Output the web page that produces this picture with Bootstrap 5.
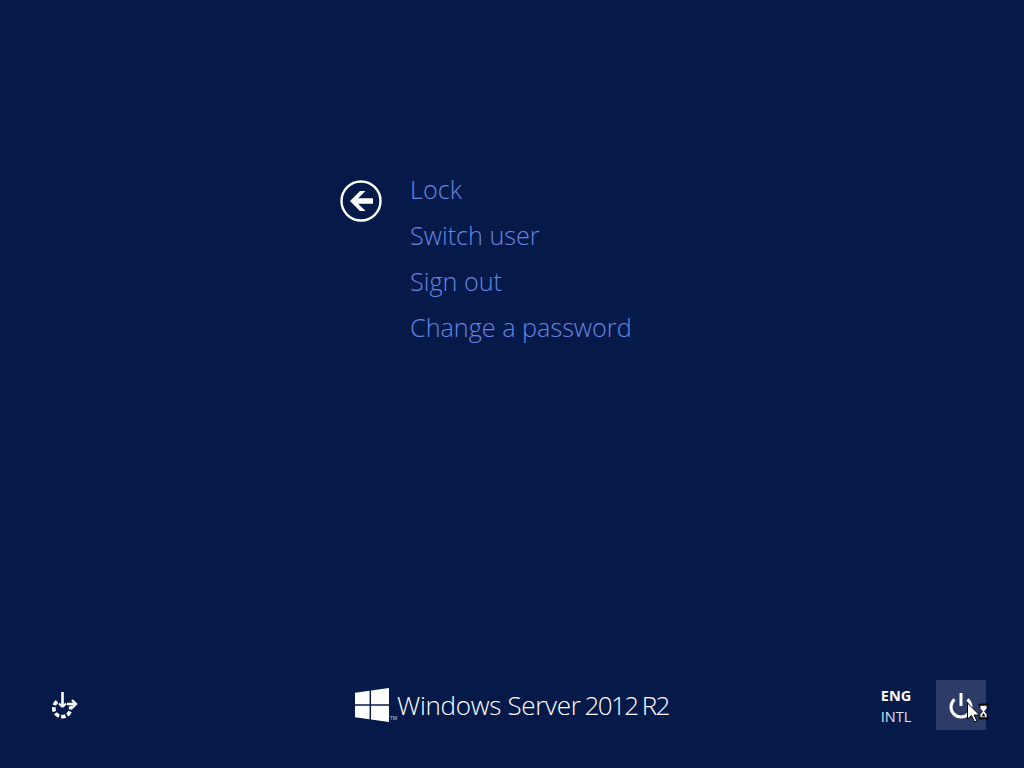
<!DOCTYPE html>
<html lang="en">
<head>
    <meta charset="UTF-8">
    <meta name="viewport" content="width=device-width, initial-scale=1.0">
    <title>Sign-in options</title>
    <link href="https://cdn.jsdelivr.net/npm/bootstrap@5.3.0/dist/css/bootstrap.min.css" rel="stylesheet">
    <style>
        html, body { height: 100%; }
        body {
            background: #061a4a;
            font-family: "Open Sans", "Liberation Sans", sans-serif;
            overflow: hidden;
        }
        .screen-wrap { height: 768px; }
        .menu-area { padding: 166px 0 0 340px; }
        .back-btn { width: 42px; height: 42px; margin-top: 14px; margin-right: 28px; }
        .menu-link {
            display: block;
            height: 46px;
            line-height: 46px;
            font-size: 25.2px;
            font-weight: 300;
            color: #6784e2;
            text-decoration: none;
            white-space: nowrap;
        }
        .bottom-area { height: 50px; margin-bottom: 38px; padding: 0 38px 0 50px; }
        .access-icon { width: 28px; height: 28px; }
        .brand { left: 355px; top: 0; }
        .brand-flag { width: 34px; height: 34px; }
        .brand-text {
            color: #fff;
            font-size: 26px;
            font-weight: 300;
            letter-spacing: -0.3px;
            white-space: nowrap;
            line-height: 1;
            margin-left: 9px;
        }
        .brand-year { margin-left: 4px; letter-spacing: -1.6px; word-spacing: -1px; }
        .brand-tm { font-size: 5px; color: #cfd6e8; align-self: flex-end; margin: 0 -6px 8px 1px; width: 5px; }
        .brand-tm + .brand-text { margin-left: 8px; }
        .lang-box { width: 50px; margin-right: 15px; color: #fff; line-height: 21px; text-align: center; padding-top: 2px; }
        .lang-top { font-size: 14.5px; font-weight: 700; }
        .lang-bottom { font-size: 14.5px; font-weight: 400; color: #dfe4f2; }
        .power-btn { width: 50px; height: 50px; background: #2d3c66; }
        .power-icon { width: 28px; height: 30px; margin: 11px 0 0 11px; display: block; }
        .cursor-icon { left: 31px; top: 22px; width: 22px; height: 22px; }
    </style>
</head>
<body>
<div class="screen-wrap d-flex flex-column justify-content-between">
    <!-- Options list -->
    <div class="menu-area d-flex align-items-start">
        <svg class="back-btn flex-shrink-0" viewBox="0 0 42 42">
            <circle cx="21" cy="21" r="19.5" fill="none" stroke="#fff" stroke-width="2.4"/>
            <path d="M10 21l10-10h5.500l-7.300 7.300H33v5.400H18.200l7.300 7.300H20z" fill="#fff"/>
        </svg>
        <div>
            <a href="#" class="menu-link">Lock</a>
            <a href="#" class="menu-link">Switch user</a>
            <a href="#" class="menu-link">Sign out</a>
            <a href="#" class="menu-link">Change a password</a>
        </div>
    </div>

    <!-- Bottom bar -->
    <div class="bottom-area d-flex align-items-center justify-content-between position-relative">
        <svg class="access-icon" viewBox="0 0 28 28">
            <path d="M7 10.500A8.500 8.500 0 1 0 20.500 15" fill="none" stroke="#fff" stroke-width="3.600" stroke-dasharray="4.500 2"/>
            <path d="M12.500 1v14" stroke="#fff" stroke-width="2.600" fill="none"/>
            <path d="M12.500 16l-3.500-3.500M12.500 16l3.500-3.500" stroke="#fff" stroke-width="2" fill="none"/>
            <path d="M17 13h9M22 9l4 4-4 4" stroke="#fff" stroke-width="2.400" fill="none"/>
        </svg>

        <div class="brand position-absolute d-flex align-items-center h-100">
            <svg class="brand-flag" viewBox="0 0 35 35">
                <path d="M0 5l15-2.200v14H0zM16.500 2.600L35 0v16.800H16.500zM0 18.200h15v14L0 30zM16.500 18.200H35V35l-18.500-2.600z" fill="#fff"/>
            </svg>
            <span class="brand-tm">TM</span>
            <div class="brand-text">Windows Server<span class="brand-year">2012 R2</span></div>
        </div>

        <div class="d-flex align-items-center">
            <div class="lang-box">
                <div class="lang-top">ENG</div>
                <div class="lang-bottom">INTL</div>
            </div>
            <div class="power-btn position-relative">
                <svg class="power-icon" viewBox="0 0 28 30">
                    <path d="M7.500 8.400a10 10 0 1 0 13 0" fill="none" stroke="#fff" stroke-width="3"/>
                    <path d="M14 2v13" stroke="#fff" stroke-width="3" fill="none"/>
                </svg>
                <!-- busy cursor -->
                <svg class="cursor-icon position-absolute" viewBox="0 0 22 22" overflow="visible">
                    <path d="M12 2h9v2h-1v2.500l-2.500 3 2.500 3V15h1v2h-9v-2h1v-2.500l2.500-3-2.500-3V4h-1z" fill="#fff" stroke="#000" stroke-width="0.800"/>
                    <path d="M12 2h9v1.800h-9zM12 15.200h9V17h-9zM14.500 14.500h4l-2-3.500z" fill="#000"/>
                    <path d="M0.500 1v16l4-3.500 3 6.500 2.500-1-3-6h5.500z" fill="#fff" stroke="#000" stroke-width="1"/>
                </svg>
            </div>
        </div>
    </div>
</div>
<script src="https://cdn.jsdelivr.net/npm/bootstrap@5.3.0/dist/js/bootstrap.bundle.min.js"></script>
</body>
</html>
